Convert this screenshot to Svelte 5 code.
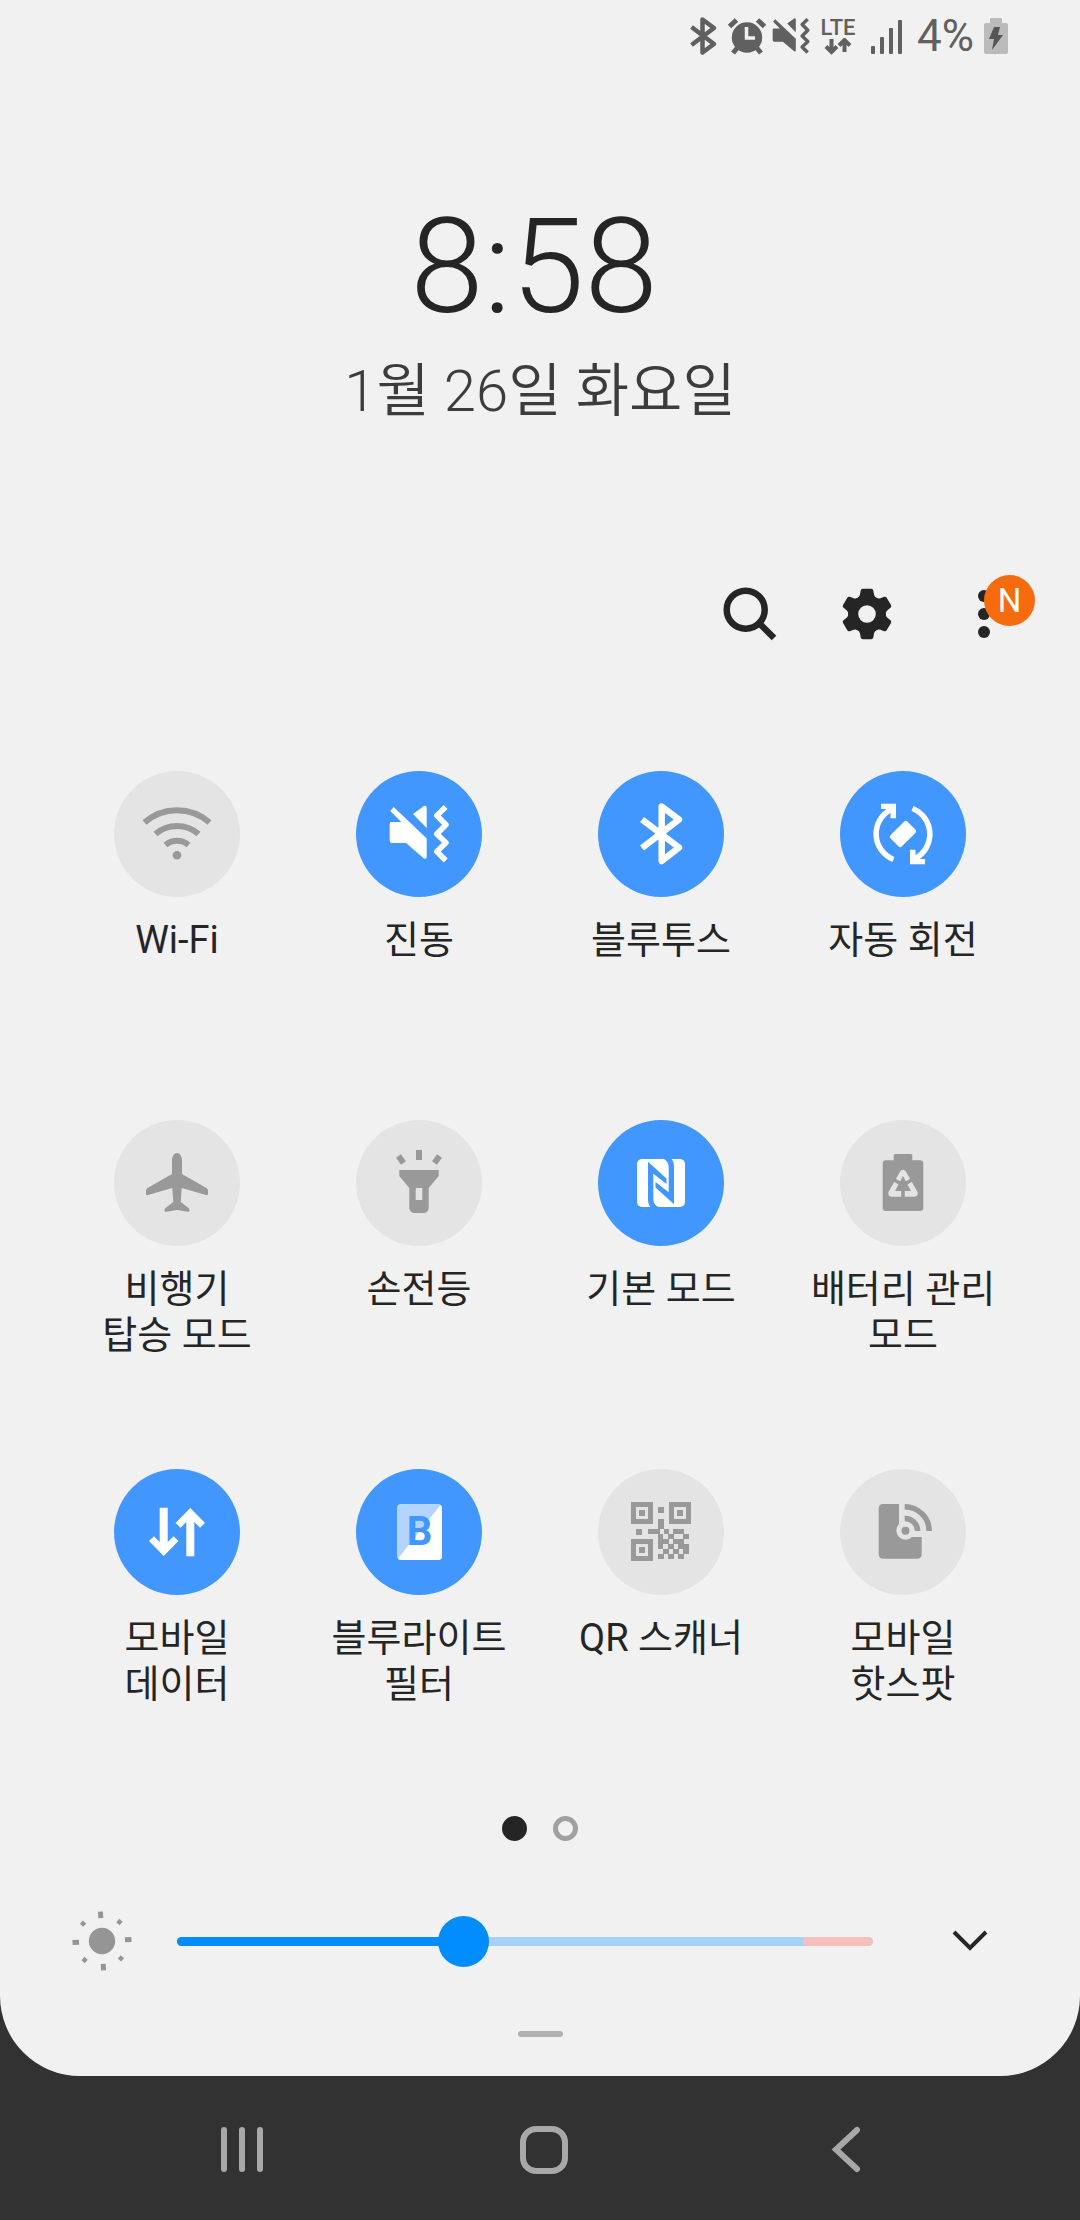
<script lang="ts">
  let tiles = $state([
    { icon: 'wifi', label: 'Wi-Fi', on: false },
    { icon: 'vibrate', label: '진동', on: true },
    { icon: 'bluetooth', label: '블루투스', on: true },
    { icon: 'rotate', label: '자동 회전', on: true },
    { icon: 'plane', label: '비행기\n탑승 모드', on: false },
    { icon: 'torch', label: '손전등', on: false },
    { icon: 'nfc', label: '기본 모드', on: true },
    { icon: 'battery', label: '배터리 관리\n모드', on: false },
    { icon: 'data', label: '모바일\n데이터', on: true },
    { icon: 'bluelight', label: '블루라이트\n필터', on: true },
    { icon: 'qr', label: 'QR 스캐너', on: false },
    { icon: 'hotspot', label: '모바일\n핫스팟', on: false }
  ]);

  let brightness = $state(103);
  let page = $state(0);

  // x, y, width of the loose QR modules
  const modules = [
    [-13, -3, 10], [-3, -3, 2], [3, -3, 5], [12, -3, 11],
    [-3, 2, 5], [7, 2, 6], [22, 2, 6],
    [-3, 7, 11], [12, 7, 11],
    [-3, 12, 5], [7, 12, 6], [17, 12, 11],
    [2, 17, 6], [12, 17, 6], [22, 17, 6],
    [-3, 22, 6], [7, 22, 6], [17, 22, 6]
  ];
</script>

{#snippet speaker()}
  <path fill="currentColor" d="M-27.5 -12H-17.7L-28.7 -23L-25.3 -27L7.7 4.5V23Q7.5 25.5 5 24.5L-13 9H-27Q-29.3 9 -29.3 6.5V-10Q-29.3 -12 -27.5 -12ZM-6 -20L5 -28Q7.7 -29 7.7 -26V-6Z" />
  <path class="line" stroke-width="5.5" stroke-linejoin="round" d="M26.7 -27L17.8 -18.5L27 -9.3L17.8 0L27 8.7L17.8 17.5L26.7 26.5" />
{/snippet}

{#snippet finder(x, y)}
  <path fill="currentColor" fill-rule="evenodd" d="M{x} {y}h22v22h-22zM{x + 5} {y + 5}v12h12v-12zM{x + 8} {y + 8}h6v6h-6z" />
{/snippet}

{#snippet tileIcon(name)}
  <svg viewBox="-36 -36 72 72" width="72" height="72" aria-hidden="true">
    {#if name === 'wifi'}
      <g class="line" stroke-width="6">
        <path d="M-32.5 -11.5A49 49 0 0 1 32.5 -11.5" />
        <path d="M-21.5 0A33 33 0 0 1 21.5 0" />
        <path d="M-11.5 11A18 18 0 0 1 11.5 11" />
      </g>
      <circle cy="21.3" r="4.3" fill="currentColor" />
    {:else if name === 'vibrate'}
      {@render speaker()}
    {:else if name === 'bluetooth'}
      <path class="line" stroke-width="6.5" stroke-linejoin="round" d="M-19 -14.5L18 13.5L.7 27V-27.5L18 -14.5L-19 14" />
    {:else if name === 'rotate'}
      {#each [0, 180] as turn}
        <g transform="rotate({turn})">
          <path class="line" stroke-width="5.5" d="M-9.5 25.5A27.5 27.5 0 0 1 -12 -24.5" />
          <path fill="currentColor" d="M-22 -30.3H-7V-15.7H-12.5V-22L-17 -25H-22Z" />
        </g>
      {/each}
      <rect x="-8" y="-12" width="16" height="24" rx="2.5" fill="currentColor" transform="rotate(45)" />
    {:else if name === 'plane'}
      <path fill="currentColor" d="M0 -30C3 -30 5 -26.5 5 -22V-9L29.5 5Q31 6 31 8V11Q31 12.5 29 12L4.7 5L3.7 19L11.5 25Q12.7 26 12.5 28Q12.3 29 11 28.7L0 27L-11 28.7Q-12.3 29 -12.5 28Q-12.7 26 -11.5 25L-3.7 19L-4.7 5L-29 12Q-31 12.5 -31 11V8Q-31 6 -29.5 5L-5 -9V-22C-5 -26.5 -3 -30 0 -30Z" />
    {:else if name === 'torch'}
      <path fill="currentColor" fill-rule="evenodd" d="M-19.7 -13H19.7V-7L9.7 5V24Q9.7 30 4 30H-4Q-9.7 30 -9.7 24V5L-19.7 -7ZM-3.3 5V17H3.3V5Z" />
      <path class="line" stroke-width="6" d="M0 -33V-23M-20.5 -27L-15.5 -20M20.5 -27L15.5 -20" />
    {:else if name === 'nfc'}
      <rect x="-24" y="-24" width="48" height="48" rx="5" fill="currentColor" />
      {#each [0, 180] as turn}
        <path class="cut" transform="rotate({turn})" d="M-13 -21.3L5.5 -4.5V1L-7.7 -9.3V16Q-7.7 22 -2 24.5H-10Q-13 22 -13 16Z" />
      {/each}
    {:else if name === 'battery'}
      <path fill="currentColor" d="M-8 -29H8Q9.3 -29 9.3 -27.5V-22.7H17Q20.3 -22.7 20.3 -19.5V25Q20.3 28 17 28H-17Q-20.3 28 -20.3 25V-19.5Q-20.3 -22.7 -17 -22.7H-9.3V-27.5Q-9.3 -29 -8 -29Z" />
      <path class="cut-line" stroke-width="7" stroke-linejoin="round" d="M0 -9.5L11.2 10.3H-11.2Z" />
      <path class="line" stroke-width="3.5" d="M0 2V15M0 2L-13 -5.5M0 2L13 -5.5" />
      <path fill="currentColor" d="M0 -7L8 8H-8Z" />
    {:else if name === 'data'}
      {#each [0, 180] as turn}
        <path transform="rotate({turn})" fill="currentColor" d="M-17.3 -24.3H-9.3V10L-3.5 4.3L1.5 9L-13.3 24L-28 9L-23 4.3L-17.3 10Z" />
      {/each}
    {:else if name === 'bluelight'}
      <rect x="-22" y="-28" width="45" height="56" rx="4" fill="#b3d4ff" />
      <path fill="currentColor" d="M21.5 -27Q23 -26 23 -24V24Q23 28 19 28H-18Q-20 28 -21 26.5Z" />
      <text class="cut" x="0.5" y="12.5" text-anchor="middle" font-size="40" font-weight="700">B</text>
    {:else if name === 'qr'}
      {@render finder(-30, -30)}
      {@render finder(8, -30)}
      {@render finder(-30, 7)}
      <path fill="currentColor" d="M-3 -25h6v6h-6zM-3 -13h6v10h-6zM-25 -3h6v6h-6z" />
      {#each modules as [x, y, w]}
        <rect {x} {y} width={w} height="5" fill="currentColor" />
      {/each}
    {:else if name === 'hotspot'}
      <path fill="currentColor" d="M-20 -28H-4V-8A9 9 0 0 0 9 5H18.7V22Q18.7 26.7 14 26.7H-20Q-24.3 26.7 -24.3 22V-23Q-24.3 -28 -20 -28Z" />
      <circle cx="2.5" cy="-1.2" r="4" fill="currentColor" />
      <path class="line" stroke-width="5.5" d="M1.7 -13.5A12.7 12.7 0 0 1 14.7 -1M1.7 -25.3A24.5 24.5 0 0 1 26.2 -1" />
    {/if}
  </svg>
{/snippet}

<div class="panel">
  <header class="status">
    <svg viewBox="-20 -20 40 40" width="40" height="40" role="img" aria-label="블루투스">
      <path class="line" stroke-width="4.5" stroke-linejoin="round" d="M-11.5 -9L11 8L-.5 16.5V-16.5L11 -8L-11.5 9" />
    </svg>
    <svg viewBox="-20 -20 40 40" width="40" height="40" role="img" aria-label="알람">
      <circle cy="1.5" r="15.2" fill="currentColor" />
      <path class="line" stroke-width="5" d="M-17.5 -9.5L-10.5 -16M17.5 -9.5L10.5 -16M-14 17L-9 11M14 17L9 11" />
      <path fill="none" stroke="#f1f1f1" stroke-width="3.5" d="M-.5 -9V2H8" />
    </svg>
    <svg viewBox="-32 -32 64 64" width="40" height="40" role="img" aria-label="진동">
      {@render speaker()}
    </svg>
    <div class="network">
      <span>LTE</span>
      <svg viewBox="0 0 28 18" width="28" height="18" aria-hidden="true">
        <path class="line" stroke-width="4" d="M7.5 1V14M2 8.5L7.500 14L13 8.500M20.500 14V3M15 7.500L20.500 2L26 7.500" />
      </svg>
    </div>
    <svg viewBox="0 0 48 40" width="48" height="40" role="img" aria-label="신호 세기">
      <g fill="currentColor">
        <rect x="6" y="30" width="4" height="8" rx="1" />
        <rect x="15" y="21" width="4" height="17" rx="1" />
        <rect x="24" y="12" width="4" height="26" rx="1" />
        <rect x="33" y="4" width="4" height="34" rx="1" />
      </g>
    </svg>
    <span class="percent">4%</span>
    <svg class="charge" viewBox="0 0 24 36" width="24" height="36" role="img" aria-label="충전 중">
      <path fill="#bbb" d="M7 0H17Q18 0 18 1V5H22Q24 5 24 7V34Q24 36 22 36H2Q0 36 0 34V7Q0 5 2 5H6V1Q6 0 7 0Z" />
      <path fill="#555" d="M10 9H16L14 17H19L8 32L10 21H5Z" />
    </svg>
  </header>

  <div class="clock">
    <time class="time">8:58</time>
    <div class="date">1월 26일 화요일</div>
  </div>

  <div class="actions">
    <button aria-label="검색">
      <svg viewBox="-36 -36 72 72" width="72" height="72">
        <circle cx="-4.3" cy="-4.3" r="19" class="line" stroke-width="6.5" />
        <path class="line" stroke-width="6.5" d="M9 9L24 24" />
      </svg>
    </button>
    <button aria-label="설정">
      <svg viewBox="-36 -36 72 72" width="72" height="72">
        <circle r="13.8" class="line" stroke-width="10" />
        {#each [0, 60, 120, 180, 240, 300] as turn}
          <path transform="rotate({turn})" fill="currentColor" d="M-10 -15.5Q-7.5 -17 -7 -19.5L-6.3 -23.5Q-6 -25.2 -4.3 -25.2H4.3Q6 -25.2 6.3 -23.5L7 -19.5Q7.5 -17 10 -15.5Z" />
        {/each}
      </svg>
    </button>
    <button class="more" aria-label="더보기">
      <svg viewBox="-36 -36 72 72" width="72" height="72" fill="currentColor">
        <circle cy="-18" r="6" />
        <circle r="6" />
        <circle cy="18" r="6" />
      </svg>
      <span class="badge">N</span>
    </button>
  </div>

  <div class="tiles">
    {#each tiles as tile}
      <button class="tile" class:on={tile.on} aria-pressed={tile.on} onclick={() => (tile.on = !tile.on)}>
        <span class="disc">{@render tileIcon(tile.icon)}</span>
        <span class="label">{tile.label}</span>
      </button>
    {/each}
  </div>

  <div class="pages">
    {#each [0, 1] as n}
      <button class:current={page === n} aria-label="{n + 1}페이지" onclick={() => (page = n)}></button>
    {/each}
  </div>

  <div class="brightness">
    <svg viewBox="-30 -30 60 60" width="60" height="60" aria-hidden="true">
      <circle r="13.2" fill="currentColor" />
      {#each [0, 90, 180, 270] as turn}
        <g transform="rotate({turn - 3})" fill="currentColor">
          <rect x="-2.5" y="-29.5" width="5" height="6.5" />
          <rect x="-2" y="-28" width="4.5" height="4.5" transform="rotate(45)" />
        </g>
      {/each}
    </svg>
    <div class="slider">
      <div class="rail">
        <div class="boost"></div>
        <div class="fill" style="width: {(brightness / 255) * 100}%"></div>
      </div>
      <input type="range" min="0" max="255" bind:value={brightness} aria-label="밝기" />
    </div>
    <button class="expand" aria-label="펼치기">
      <svg viewBox="0 0 36 22" width="36" height="22">
        <path class="line" stroke-width="4" d="M2 2L18 18L34 2" />
      </svg>
    </button>
  </div>

  <div class="handle"></div>
</div>

<nav>
  <button aria-label="최근 앱">
    <svg viewBox="0 0 48 48" width="48" height="48">
      <path class="line" stroke-width="6" stroke-linecap="round" d="M6 4V43M24 4V43M42 4V43" />
    </svg>
  </button>
  <button aria-label="홈">
    <svg viewBox="0 0 48 48" width="48" height="48">
      <rect x="3" y="3" width="42" height="42" rx="13" class="line" stroke-width="6" />
    </svg>
  </button>
  <button aria-label="뒤로">
    <svg viewBox="0 0 48 48" width="48" height="48">
      <path class="line" stroke-width="6" stroke-linecap="round" d="M35 4L14 23.5L35 43" />
    </svg>
  </button>
</nav>

<style>
  :global(body) {
    background: #323232;
    font-family: Roboto, "Noto Sans CJK KR", sans-serif;
    color: #252525;
  }

  button {
    padding: 0;
    border: none;
    background: none;
    font: inherit;
    color: inherit;
    cursor: pointer;
  }

  svg {
    display: block;
    flex-shrink: 0;
  }

  .line {
    fill: none;
    stroke: currentColor;
  }

  .panel {
    display: flex;
    flex-direction: column;
    padding-bottom: 39px;
    background: #f1f1f1;
    border-radius: 0 0 80px 80px;
  }

  .status {
    display: flex;
    justify-content: flex-end;
    align-items: center;
    gap: 4px;
    height: 72px;
    padding: 0 72px;
    color: #606060;
  }

  .network {
    display: flex;
    flex-direction: column;
    align-items: center;
    width: 46px;
    font-size: 22px;
    font-weight: 500;
    line-height: 21px;
  }

  .percent {
    font-size: 44px;
    line-height: 48px;
  }

  .charge {
    margin-left: 6px;
  }

  .clock {
    display: flex;
    flex-direction: column;
    align-items: center;
    gap: 18px;
    padding-top: 125px;
  }

  .time {
    padding-right: 12px;
    font-size: 132px;
    font-weight: 300;
    line-height: 140px;
  }

  .date {
    font-size: 58px;
    font-weight: 350;
    line-height: 72px;
    color: #3c3c3c;
  }

  .actions {
    display: flex;
    justify-content: flex-end;
    gap: 45px;
    padding: 151px 60px 0;
  }

  .more {
    position: relative;
  }

  .badge {
    position: absolute;
    top: -3px;
    right: -15px;
    width: 51px;
    border-radius: 50%;
    background: #f66b0e;
    color: #fff;
    font-size: 33px;
    line-height: 51px;
    text-align: center;
  }

  .tiles {
    display: grid;
    grid-template-columns: repeat(4, 1fr);
    row-gap: 111px;
    padding: 121px 56px 0;
  }

  .tile {
    display: flex;
    flex-direction: column;
    align-items: center;
    gap: 20px;
  }

  .disc {
    display: grid;
    place-items: center;
    width: 126px;
    height: 126px;
    border-radius: 50%;
    background: #e4e4e4;
    color: #999;
  }

  .on .disc {
    background: #4297ff;
    color: #fff;
  }

  .cut {
    fill: #e4e4e4;
  }

  .on .cut {
    fill: #4297ff;
  }

  .cut-line {
    fill: none;
    stroke: #e4e4e4;
  }

  .on .cut-line {
    stroke: #4297ff;
  }

  .label {
    min-height: 92px;
    font-size: 38px;
    line-height: 46px;
    white-space: pre;
  }

  .pages {
    display: flex;
    justify-content: center;
    gap: 26px;
    padding-top: 109px;
  }

  .pages button {
    width: 25px;
    height: 25px;
    border: 5px solid #a0a0a0;
    border-radius: 50%;
  }

  .pages .current {
    border-color: #252525;
    background: #252525;
  }

  .brightness {
    display: flex;
    align-items: center;
    gap: 45px;
    padding: 70px 72px 0;
    color: #959595;
  }

  .slider {
    position: relative;
    flex: 1;
    height: 52px;
    display: flex;
    align-items: center;
  }

  .rail {
    position: relative;
    width: 100%;
    height: 9px;
    border-radius: 5px;
    background: #a8d2f5;
    overflow: hidden;
  }

  .fill {
    position: absolute;
    inset: 0 auto 0 0;
    background: #018cff;
  }

  .boost {
    position: absolute;
    inset: 0 0 0 auto;
    width: 10%;
    border-radius: 5px;
    background: #f6bfbc;
  }

  input {
    appearance: none;
    position: absolute;
    inset: 0;
    width: 100%;
    margin: 0;
    background: none;
  }

  input::-webkit-slider-thumb {
    appearance: none;
    width: 51px;
    height: 51px;
    border-radius: 50%;
    background: #018cff;
  }

  .expand {
    display: grid;
    place-items: center;
    width: 76px;
    height: 60px;
    margin-left: 14px;
    color: #252525;
  }

  .handle {
    width: 45px;
    height: 6px;
    margin: 60px auto 0;
    border-radius: 3px;
    background: #b0b0b0;
  }

  nav {
    display: flex;
    box-sizing: border-box;
    height: 144px;
    padding: 3px 83px 0 91px;
    color: #a8a8a8;
  }

  nav button {
    display: grid;
    place-items: center;
    flex: 1;
  }
</style>
